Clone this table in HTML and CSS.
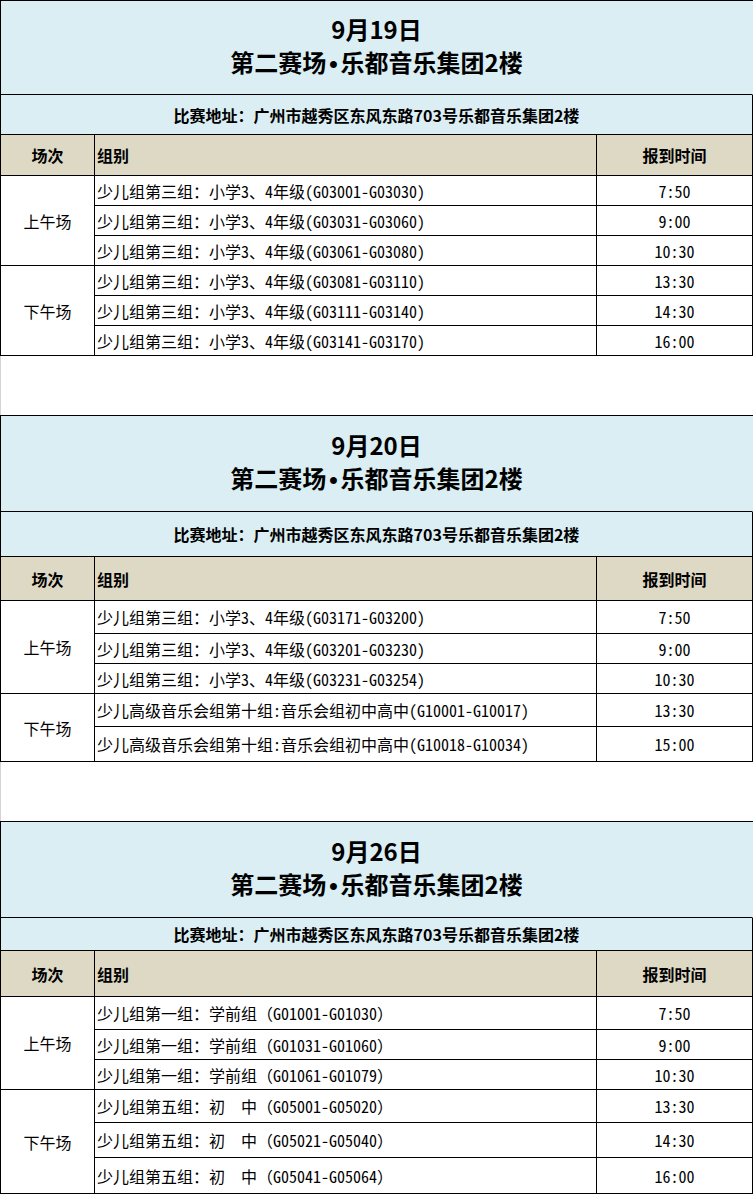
FILE: index.html
```html
<!DOCTYPE html>
<html lang="zh-CN">
<head>
<meta charset="utf-8">
<title>赛程安排</title>
<link rel="stylesheet" href="styles.css">
</head>
<body>
<div class="sched t1">
  <div class="title"><div>9月19日<br>第二赛场<span class="dot">•</span>乐都音乐集团2楼</div></div>
  <div class="addr">比赛地址：广州市越秀区东风东路703号乐都音乐集团2楼</div>
  <div class="hd c">场次</div>
  <div class="hd l">组别</div>
  <div class="hd c">报到时间</div>
  <div class="session span3">上午场</div>
  <div class="grp">少儿组第三组：小学3、4年级(G03001-G03030)</div><div class="tm">7:50</div>
  <div class="grp">少儿组第三组：小学3、4年级(G03031-G03060)</div><div class="tm">9:00</div>
  <div class="grp">少儿组第三组：小学3、4年级(G03061-G03080)</div><div class="tm">10:30</div>
  <div class="session span3">下午场</div>
  <div class="grp">少儿组第三组：小学3、4年级(G03081-G03110)</div><div class="tm">13:30</div>
  <div class="grp">少儿组第三组：小学3、4年级(G03111-G03140)</div><div class="tm">14:30</div>
  <div class="grp">少儿组第三组：小学3、4年级(G03141-G03170)</div><div class="tm">16:00</div>
</div>
<div class="spacer"></div>
<div class="sched t2">
  <div class="title"><div>9月20日<br>第二赛场<span class="dot">•</span>乐都音乐集团2楼</div></div>
  <div class="addr">比赛地址：广州市越秀区东风东路703号乐都音乐集团2楼</div>
  <div class="hd c">场次</div>
  <div class="hd l">组别</div>
  <div class="hd c">报到时间</div>
  <div class="session span3">上午场</div>
  <div class="grp">少儿组第三组：小学3、4年级(G03171-G03200)</div><div class="tm">7:50</div>
  <div class="grp">少儿组第三组：小学3、4年级(G03201-G03230)</div><div class="tm">9:00</div>
  <div class="grp">少儿组第三组：小学3、4年级(G03231-G03254)</div><div class="tm">10:30</div>
  <div class="session span2">下午场</div>
  <div class="grp">少儿高级音乐会组第十组:音乐会组初中高中(G10001-G10017)</div><div class="tm">13:30</div>
  <div class="grp">少儿高级音乐会组第十组:音乐会组初中高中(G10018-G10034)</div><div class="tm">15:00</div>
</div>
<div class="spacer"></div>
<div class="sched t3">
  <div class="title"><div>9月26日<br>第二赛场<span class="dot">•</span>乐都音乐集团2楼</div></div>
  <div class="addr">比赛地址：广州市越秀区东风东路703号乐都音乐集团2楼</div>
  <div class="hd c">场次</div>
  <div class="hd l">组别</div>
  <div class="hd c">报到时间</div>
  <div class="session span3">上午场</div>
  <div class="grp">少儿组第一组：学前组<span class="fw">（</span>G01001-G01030<span class="fw">）</span></div><div class="tm">7:50</div>
  <div class="grp">少儿组第一组：学前组<span class="fw">（</span>G01031-G01060<span class="fw">）</span></div><div class="tm">9:00</div>
  <div class="grp">少儿组第一组：学前组<span class="fw">（</span>G01061-G01079<span class="fw">）</span></div><div class="tm">10:30</div>
  <div class="session span3">下午场</div>
  <div class="grp">少儿组第五组：初<span class="fw">　</span>中<span class="fw">（</span>G05001-G05020<span class="fw">）</span></div><div class="tm">13:30</div>
  <div class="grp">少儿组第五组：初<span class="fw">　</span>中<span class="fw">（</span>G05021-G05040<span class="fw">）</span></div><div class="tm">14:30</div>
  <div class="grp">少儿组第五组：初<span class="fw">　</span>中<span class="fw">（</span>G05041-G05064<span class="fw">）</span></div><div class="tm">16:00</div>
</div>
</body>
</html>
```
FILE: styles.css
```css
html, body {
  margin: 0;
  padding: 0;
  background: #fff;
}
body {
  width: 753px;
  font-family: "Noto Sans CJK SC", "Noto Sans", sans-serif;
  color: #000;
}
.sched {
  box-sizing: border-box;
  width: 753px;
  display: grid;
  grid-template-columns: 94px 502px 156px;
  border-top: 1px solid #000;
  border-left: 1px solid #000;
}
.t1 { grid-template-rows: 94px 40px 41px repeat(6, 30px); }
.t2 { grid-template-rows: 96px 45px 44px 33px 30px 30px 33px 35px; }
.t3 { grid-template-rows: 96px 33px 46px 33px 30px 30px 33px 35px 36px; }
.sched > div {
  box-sizing: border-box;
  border-right: 1px solid #000;
  border-bottom: 1px solid #000;
  display: flex;
  align-items: center;
  overflow: hidden;
  white-space: nowrap;
}
.title {
  grid-column: 1 / -1;
  background: #daeef3;
  justify-content: center;
  text-align: center;
  font-weight: 700;
  font-size: 24px;
  line-height: 33px;
  padding-bottom: 3px;
  border-right-color: transparent !important;
}
.dot {
  font-family: "Liberation Sans", sans-serif;
  margin: 0 3px;
}
.addr {
  grid-column: 1 / -1;
  background: #daeef3;
  justify-content: center;
  font-weight: 700;
  font-size: 16px;
}
.hd {
  background: #ddd9c4;
  font-weight: 700;
  font-size: 16px;
}
.hd.c { justify-content: center; }
.hd.l { padding-left: 2px; }
.session {
  justify-content: center;
  font-size: 16px;
}
.span3 { grid-row: span 3; }
.span2 { grid-row: span 2; }
.grp {
  font-size: 16px;
  padding-left: 2px;
  font-feature-settings: "hwid" 1;
}
.fw {
  font-feature-settings: normal;
}
.tm {
  justify-content: center;
  font-size: 16px;
  font-feature-settings: "hwid" 1;
}
.spacer {
  height: 59px;
  border-left: 1px solid #d4d4d4;
}
```
